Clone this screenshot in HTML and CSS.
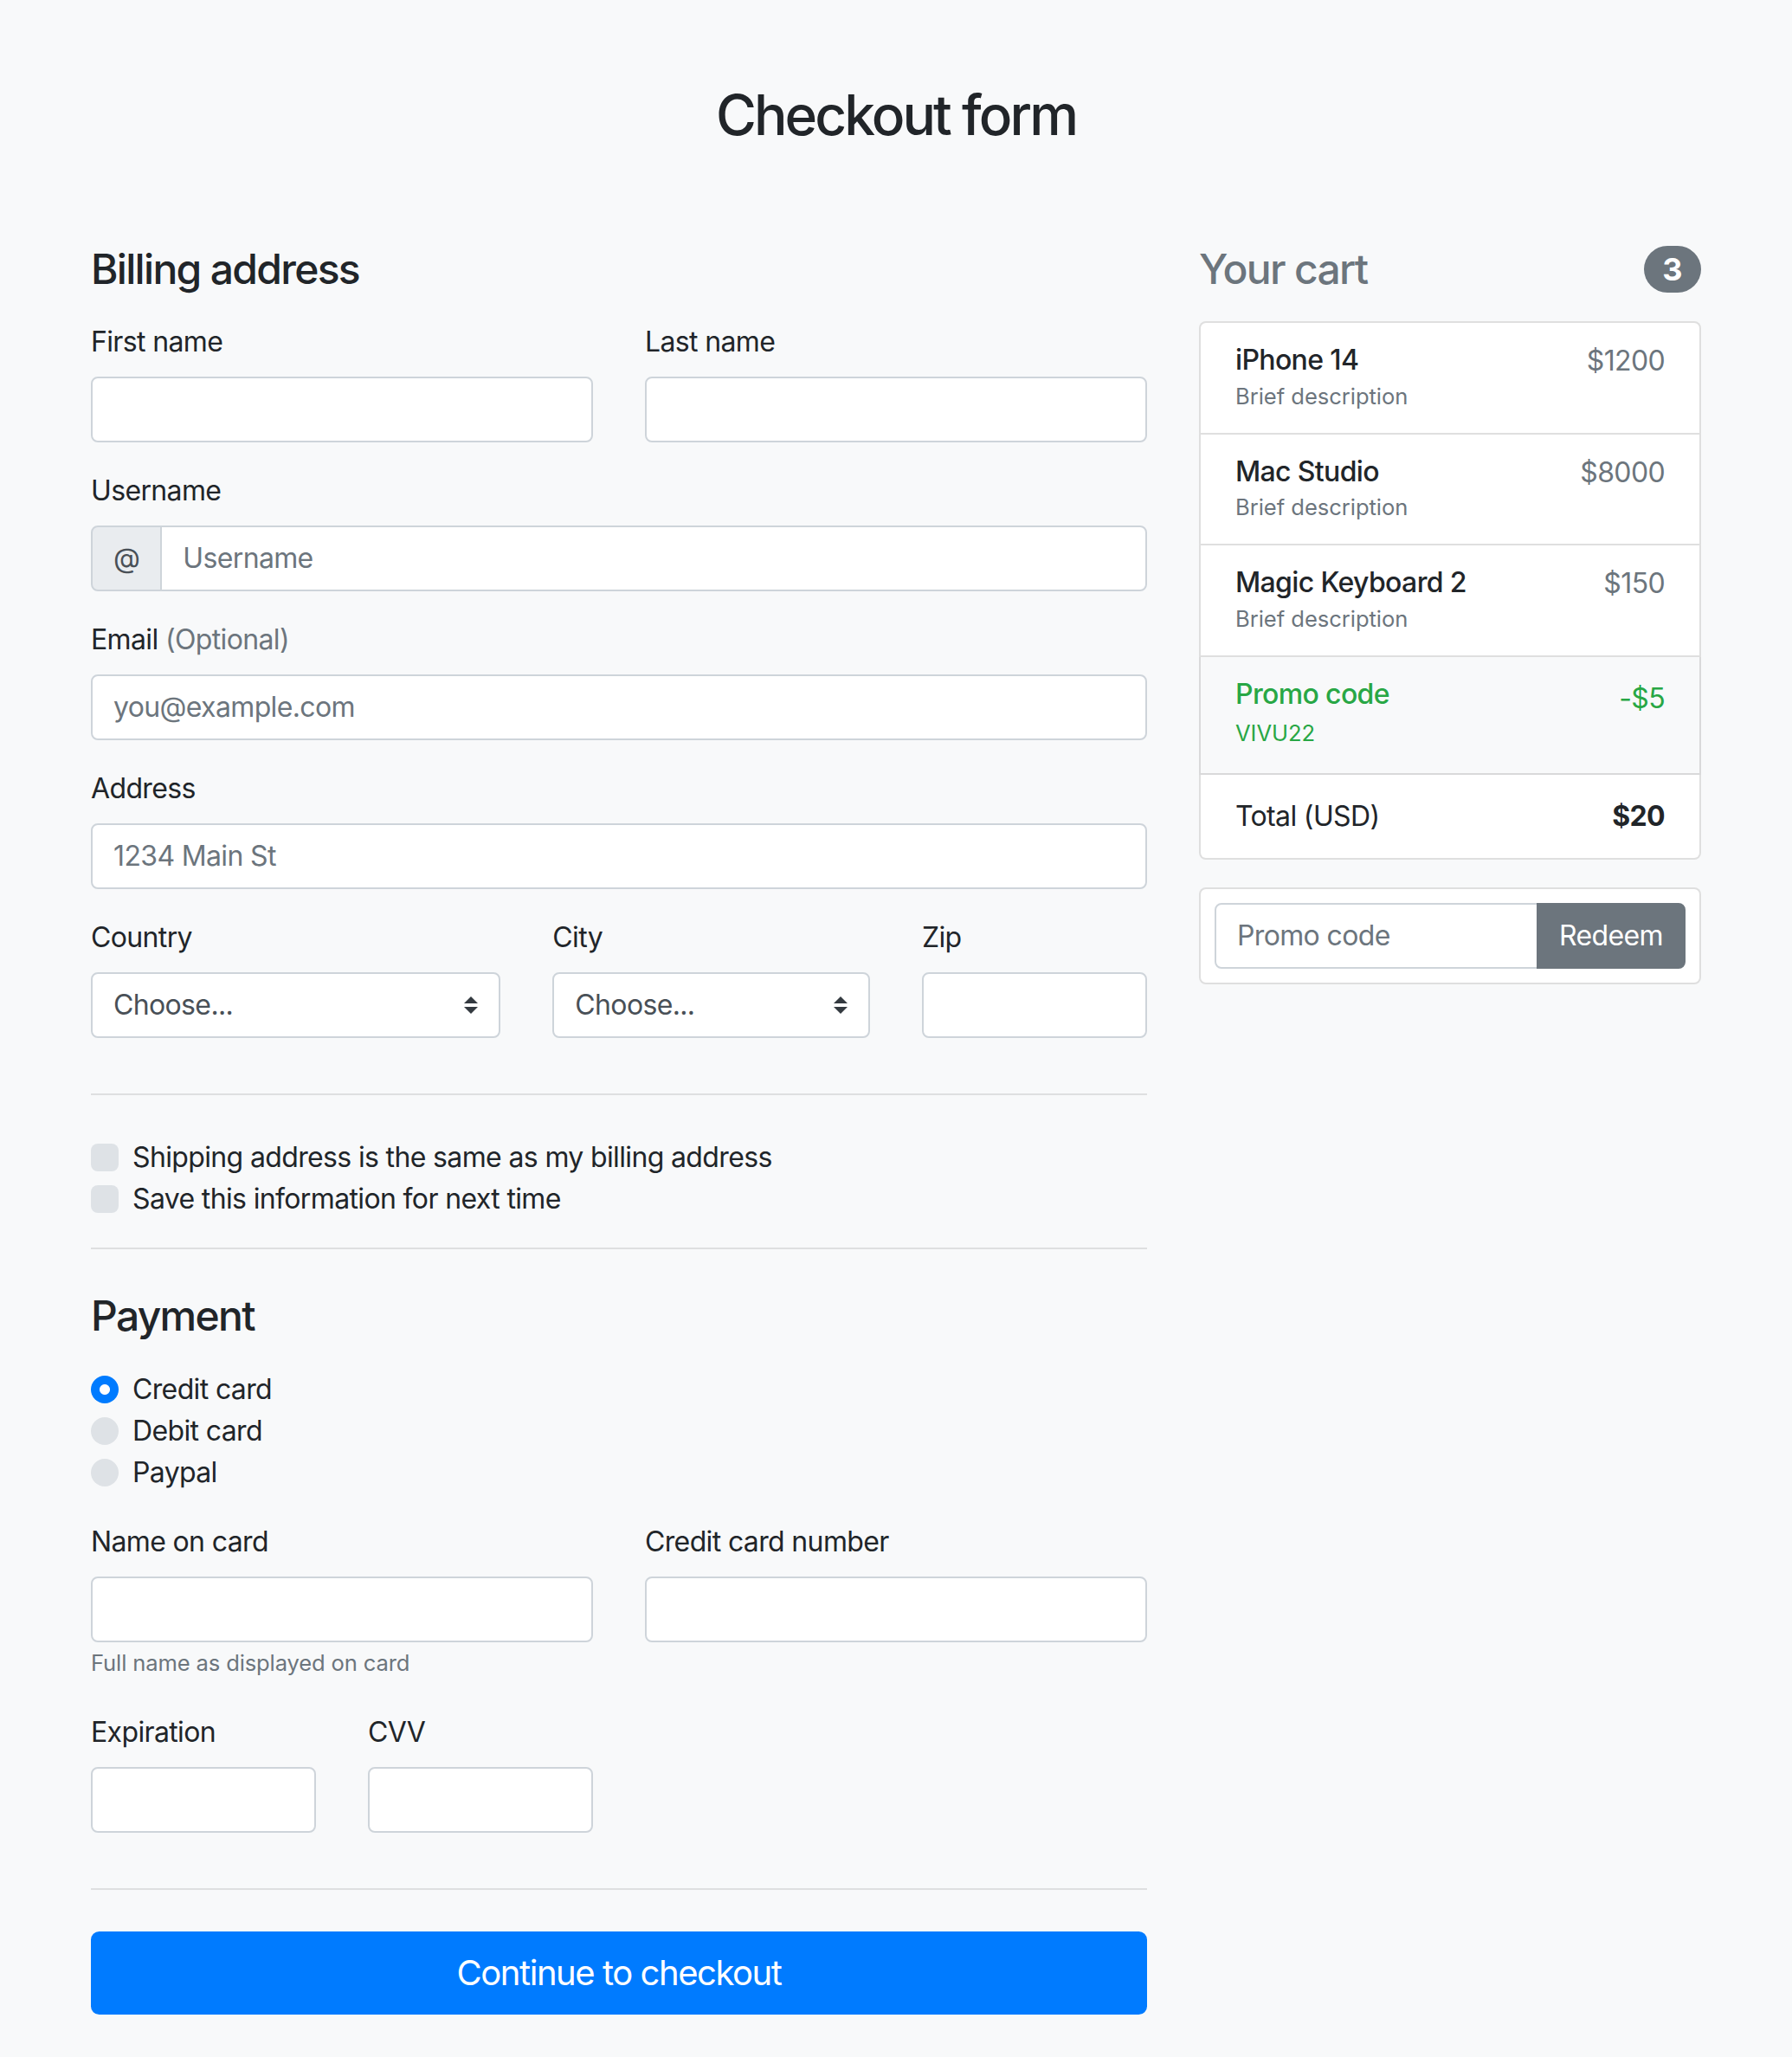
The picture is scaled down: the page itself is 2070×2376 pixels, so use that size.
FILE: index.html
```html
<!DOCTYPE html>
<html lang="en">
<head>
<meta charset="utf-8">
<title>Checkout form</title>
<link rel="stylesheet" href="styles.css">
</head>
<body>
<div class="container">
  <header class="page-header">
    <h2 class="page-title">Checkout form</h2>
  </header>

  <div class="layout">
    <main class="main-col">
      <h4 class="section-title">Billing address</h4>
      <form class="form">
        <div class="grid grid-half">
          <div class="field">
            <label class="label">First name</label>
            <div class="control"></div>
          </div>
          <div class="field">
            <label class="label">Last name</label>
            <div class="control"></div>
          </div>
        </div>

        <div class="field">
          <label class="label">Username</label>
          <div class="input-group">
            <span class="addon">@</span>
            <div class="control control-joined"><span class="ph">Username</span></div>
          </div>
        </div>

        <div class="field">
          <label class="label">Email <span class="muted">(Optional)</span></label>
          <div class="control"><span class="ph">you@example.com</span></div>
        </div>

        <div class="field">
          <label class="label">Address</label>
          <div class="control"><span class="ph">1234 Main St</span></div>
        </div>

        <div class="grid grid-address">
          <div class="field">
            <label class="label">Country</label>
            <div class="control select"><span>Choose...</span>
              <svg class="caret" viewBox="0 0 4 5" width="16" height="20"><path d="M2 0L0 2h4zm0 5L0 3h4z" fill="#343a40"/></svg>
            </div>
          </div>
          <div class="field">
            <label class="label">City</label>
            <div class="control select"><span>Choose...</span>
              <svg class="caret" viewBox="0 0 4 5" width="16" height="20"><path d="M2 0L0 2h4zm0 5L0 3h4z" fill="#343a40"/></svg>
            </div>
          </div>
          <div class="field">
            <label class="label">Zip</label>
            <div class="control"></div>
          </div>
        </div>

        <hr class="divider">

        <div class="check"><span class="box"></span><span>Shipping address is the same as my billing address</span></div>
        <div class="check"><span class="box"></span><span>Save this information for next time</span></div>

        <hr class="divider">

        <h4 class="section-title">Payment</h4>

        <div class="radios">
          <div class="check"><span class="box round checked"></span><span>Credit card</span></div>
          <div class="check"><span class="box round"></span><span>Debit card</span></div>
          <div class="check"><span class="box round"></span><span>Paypal</span></div>
        </div>

        <div class="grid grid-half">
          <div class="field">
            <label class="label">Name on card</label>
            <div class="control"></div>
            <small class="help">Full name as displayed on card</small>
          </div>
          <div class="field">
            <label class="label">Credit card number</label>
            <div class="control"></div>
          </div>
        </div>

        <div class="grid grid-quarter">
          <div class="field">
            <label class="label">Expiration</label>
            <div class="control"></div>
          </div>
          <div class="field">
            <label class="label">CVV</label>
            <div class="control"></div>
          </div>
        </div>

        <hr class="divider">

        <button class="btn-primary" type="button">Continue to checkout</button>
      </form>
    </main>

    <aside class="cart-col">
      <h4 class="cart-title"><span class="muted">Your cart</span><span class="badge">3</span></h4>
      <ul class="list">
        <li class="item condensed">
          <div><h6 class="item-name">iPhone 14</h6><small class="item-desc">Brief description</small></div>
          <span class="muted">$1200</span>
        </li>
        <li class="item condensed">
          <div><h6 class="item-name">Mac Studio</h6><small class="item-desc">Brief description</small></div>
          <span class="muted">$8000</span>
        </li>
        <li class="item condensed">
          <div><h6 class="item-name">Magic Keyboard 2</h6><small class="item-desc">Brief description</small></div>
          <span class="muted">$150</span>
        </li>
        <li class="item promo">
          <div><h6 class="item-name">Promo code</h6><small class="item-code">VIVU22</small></div>
          <span>-$5</span>
        </li>
        <li class="item">
          <span>Total (USD)</span>
          <strong class="total">$20</strong>
        </li>
      </ul>

      <form class="promo-card">
        <div class="input-group">
          <div class="control control-left"><span class="ph">Promo code</span></div>
          <button class="btn-secondary" type="button">Redeem</button>
        </div>
      </form>
    </aside>
  </div>
</div>
</body>
</html>
```

FILE: styles.css
```css
* { box-sizing: border-box; }

body {
  margin: 0;
  background: #f8f9fa;
  color: #212529;
  font-family: Inter, "Noto Sans", "Liberation Sans", sans-serif;
  font-size: 32px;
  line-height: 1.5;
  font-weight: 400;
  letter-spacing: -0.64px;
}

.container {
  width: 1920px;
  margin: 0 auto;
  padding: 0 30px;
}

.page-header {
  padding: 95px 0 94px;
  text-align: center;
}

.page-title {
  margin: 0 0 16px;
  font-size: 64px;
  font-weight: 500;
  line-height: 1.2;
  letter-spacing: -2.9px;
}

.layout {
  display: flex;
  gap: 60px;
  align-items: flex-start;
}

.main-col { width: 1220px; }
.cart-col { width: 580px; margin-bottom: 48px; }

.section-title {
  margin: 0 0 32px;
  font-size: 48px;
  font-weight: 500;
  line-height: 1.2;
  letter-spacing: -1.7px;
}

.form { margin: 0; }

.grid { display: grid; column-gap: 60px; }
.grid-half { grid-template-columns: 580px 580px; }
.grid-address { grid-template-columns: 473.33px 366.67px 260px; }
.grid-quarter { grid-template-columns: 260px 260px; }

.field { margin-bottom: 32px; }

.label {
  display: block;
  margin-bottom: 16px;
  line-height: 48px;
}

.muted { color: #6c757d; }

.control {
  display: flex;
  align-items: center;
  height: 76px;
  padding: 0 24px;
  background: #fff;
  border: 2px solid #ced4da;
  border-radius: 8px;
  color: #495057;
  font-size: 32px;
  line-height: 48px;
}

.ph { color: #6c757d; }

.input-group { display: flex; }

.addon {
  display: flex;
  align-items: center;
  height: 76px;
  padding: 0 24px;
  background: #e9ecef;
  border: 2px solid #ced4da;
  border-radius: 8px 0 0 8px;
  color: #495057;
}

.control-joined {
  flex: 1;
  margin-left: -2px;
  border-radius: 0 8px 8px 0;
}

.select {
  justify-content: space-between;
  padding-right: 24px;
}

.caret { display: block; }

.divider {
  margin: 32px 0 48px;
  border: 0;
  border-top: 2px solid rgba(0, 0, 0, 0.1);
  height: 0;
}

.check {
  display: flex;
  align-items: flex-start;
  line-height: 48px;
}

.box {
  flex: none;
  width: 32px;
  height: 32px;
  margin: 8px 16px 0 0;
  background: #dee2e6;
  border-radius: 8px;
}

.round { border-radius: 50%; }

.checked {
  background: radial-gradient(circle, #fff 0 5.5px, #007bff 6.5px);
}

.radios { margin-bottom: 32px; }

.help {
  display: block;
  font-size: 25.6px;
  line-height: 48px;
  color: #6c757d;
  letter-spacing: -0.15px;
}

.btn-primary {
  display: block;
  width: 100%;
  padding: 16px 32px;
  font-family: inherit;
  font-size: 40px;
  line-height: 60px;
  letter-spacing: -1.45px;
  color: #fff;
  background: #007bff;
  border: 2px solid #007bff;
  border-radius: 9.6px;
  text-align: center;
}

/* Cart */
.cart-title {
  display: flex;
  justify-content: space-between;
  align-items: center;
  margin: 0 0 32px;
  font-size: 48px;
  font-weight: 500;
  line-height: 1.2;
  letter-spacing: -1.7px;
}

.badge {
  display: inline-block;
  padding: 9px 21.6px;
  font-size: 36px;
  font-weight: 700;
  line-height: 1;
  letter-spacing: 0;
  color: #fff;
  background: #6c757d;
  border-radius: 320px;
}

.list {
  list-style: none;
  margin: 0 0 32px;
  padding: 0;
}

.item {
  display: flex;
  justify-content: space-between;
  padding: 24px 40px;
  background: #fff;
  border: 2px solid rgba(0, 0, 0, 0.125);
}

.item + .item { border-top-width: 0; }
.item:first-child { border-radius: 8px 8px 0 0; }
.item:last-child { border-radius: 0 0 8px 8px; }

.condensed { line-height: 1.25; }

.item-name {
  margin: 0;
  font-size: 32px;
  font-weight: 500;
  line-height: 1.2;
}

.item-desc {
  font-size: 25.6px;
  color: #6c757d;
  letter-spacing: -0.05px;
}

.item-code {
  font-size: 25.6px;
  letter-spacing: -0.05px;
}

.promo {
  background: #f8f9fa;
  color: #28a745;
}

.total { font-weight: 700; }

.promo-card {
  margin: 0;
  padding: 16px;
  background: #fff;
  border: 2px solid rgba(0, 0, 0, 0.125);
  border-radius: 8px;
}

.control-left {
  flex: 1;
  border-radius: 8px 0 0 8px;
}

.btn-secondary {
  height: 76px;
  margin-left: -2px;
  padding: 0 24px;
  font-family: inherit;
  font-size: 32px;
  line-height: 48px;
  letter-spacing: -0.64px;
  color: #fff;
  background: #6c757d;
  border: 2px solid #6c757d;
  border-radius: 0 8px 8px 0;
}
```
